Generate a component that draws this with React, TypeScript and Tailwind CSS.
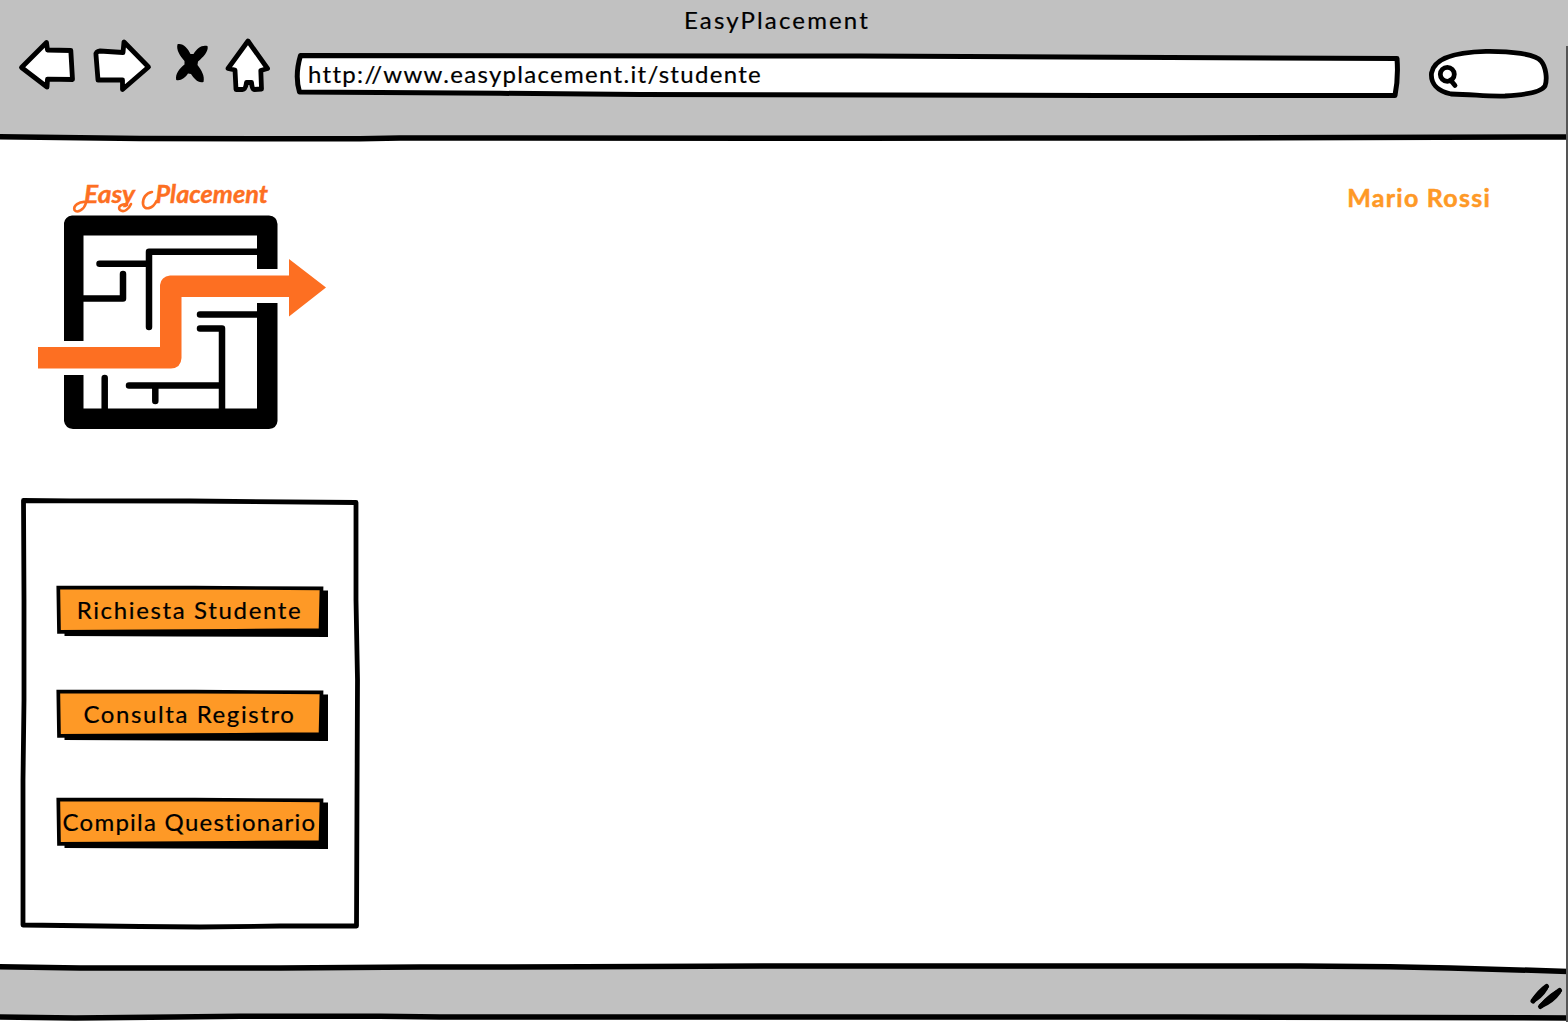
import React from "react";

const line = {
  fill: "none",
  stroke: "#000",
  strokeLinecap: "round" as const,
  strokeLinejoin: "round" as const,
};

function BackIcon() {
  return (
    <svg className="h-[56px] w-[58px] shrink-0" viewBox="18 38 58 56">
      <path {...line} fill="#fff" strokeWidth="4.800" d="M21.500 67.500 L46.500 42.500 L47.500 50 L70.800 50.500 L72.500 79.500 L47.500 79.200 L47 87 Z" />
    </svg>
  );
}

function ForwardIcon() {
  return (
    <svg className="ml-4 h-[56px] w-[60px] shrink-0" viewBox="92 38 60 56">
      <path {...line} fill="#fff" strokeWidth="4.800" d="M148.500 67 L124 42 L123 52.500 L100 51 Q95.500 51.500 96 55 L98 80 L122.500 80 L122.500 89.500 Z" />
    </svg>
  );
}

function StopIcon() {
  return (
    <svg className="ml-[22px] h-[56px] w-[36px] shrink-0" viewBox="174 38 36 56">
      <path d="M177.500 44.300 C183 43 187.500 48 190.500 54 L193.500 54 C197 48 202 44.500 207.500 46 C209 51 203 57.500 198 61.500 L197.500 65 C201.500 70 205 76 203.500 82 C198 83.500 194 78.500 191 74 L188 73.500 C185 78 181 81 176.200 80 C175 74 179.500 68.500 184.500 64.500 L184.500 61 C180 56 176 50 177.500 44.300 Z" />
    </svg>
  );
}

function HomeIcon() {
  return (
    <svg className="ml-[14px] h-[56px] w-[48px] shrink-0" viewBox="224 38 48 56">
      <path {...line} fill="#fff" strokeWidth="4.800" d="M248 41 L267.500 68.500 L260.800 70.500 L261.500 89 L254 89.500 Q252 89 251.500 82.500 L246.500 82.500 Q245.500 89.500 242.500 89.500 L236 89.500 L235 70 L228 68.500 Z" />
    </svg>
  );
}

function AddressBar() {
  return (
    <div className="relative ml-[22px] flex h-[50px] w-[1106px] shrink-0 items-center pb-0.5 pl-[14px]">
      <svg className="absolute inset-0 h-full w-full" viewBox="294 50 1106 50">
        <path {...line} fill="#fff" strokeWidth="5" d="M300.500 55.500 L860 56 L1397 58.500 Q1398.500 78 1395 95.500 L1100 95.500 L640 94.500 L500 93.300 L299.500 92 Q294.500 76 300.500 55.500 Z" />
      </svg>
      <span className="relative whitespace-nowrap text-[24px] leading-[30px] tracking-[1.3px]">
        http://www.easyplacement.it/studente
      </span>
    </div>
  );
}

function SearchBox() {
  return (
    <svg className="ml-[26px] h-[56px] w-[124px] shrink-0" viewBox="1426 46 124 56">
      <path {...line} fill="#fff" strokeWidth="4.800" d="M1451 94 C1437 91 1430.500 83 1431.500 73 C1434 58 1456 52 1486 51.300 C1510 51 1536 54 1541 61 C1546 67 1547.500 79 1545 86 C1541 92.500 1524 95 1505 96 C1485 96.500 1475 94.500 1451 94 Z" />
      <circle {...line} cx="1447.300" cy="74.300" r="7" strokeWidth="4.800" />
      <path {...line} strokeWidth="4.800" d="M1450.500 80 L1455 85.500" />
    </svg>
  );
}

function Logo() {
  return (
    <svg className="h-[260px] w-[300px]" viewBox="34 176 300 260">
      <g fill="#fd6f22" fontSize="25" fontWeight="700" fontStyle="italic" fontFamily="Lato, sans-serif" stroke="#fd6f22" strokeWidth="0.400">
        <text y="202.500">
          <tspan x="84" textLength="51" lengthAdjust="spacingAndGlyphs">Easy</tspan>
          <tspan x="150" textLength="118" lengthAdjust="spacingAndGlyphs"> Placement</tspan>
        </text>
      </g>
      {/* swashes of the wordmark's capitals and descender */}
      <g {...line} stroke="#fd6f22" strokeWidth="2.600">
        <path d="M86 202 C79 201 73 206 74.500 210 C77 213.500 84 210 86 203" />
        <path d="M156.500 201 C153 209 144 211 143 204 C142.500 198 146 193 152 192" />
        <path d="M127 205 C122 203 117 207 120 210 C124 213 129 209 131 204" />
      </g>
      <path fill="#000" d="M72 215.500 H269 Q277 216 277.500 224 V269 H257 V235.500 H83.500 V341 H64 V223 Q65 216.500 72 215.500 Z" />
      <path fill="#000" d="M64 375 H83.500 V408.500 H257 V303 H277.500 V421 Q277 428 269 429 H73 Q65 428 64 421 Z" />
      <g {...line} strokeWidth="6.500">
        <path d="M99.500 263.800 H148 M258 251.800 H149 V327 M83 298.500 H123 V274 M200 314.500 H258 M200 328.500 H222 V409 M129 385.500 H222 M155.300 386 V401 M104.700 378 V409" />
      </g>
      <path fill="#fd6f22" d="M38 347 H160 V285 Q161 276.500 170 275.500 H289 V259 L326 287.500 L289 316.500 V297 H181.500 V358 Q181 368 171 368.500 H38 Z" />
    </svg>
  );
}

function MenuButton({ label, className, textClassName }: { label: string; className: string; textClassName: string }) {
  return (
    <button className={`relative flex h-[52px] w-[274px] items-center justify-center pb-0.5 pr-[5px] ${className}`}>
      <svg className="absolute inset-0 h-full w-full" viewBox="0 0 274 52">
        <path d="M9.500 5.500 H273 V52 L120 51.500 L9.500 51 Z" />
        <path fill="#fe9926" stroke="#000" strokeWidth="3.700" d="M3.300 2.500 L140 2.700 L266.500 3.300 L265.500 45 L180 45.800 L4 46.800 Z" />
      </svg>
      <span className={`relative whitespace-nowrap text-[24px] leading-[30px] ${textClassName}`}>{label}</span>
    </button>
  );
}

function SideMenu() {
  return (
    <nav className="relative ml-[18px] mt-[60px] flex h-[436px] w-[344px] flex-col items-start pl-[37px] pt-[89px]">
      <svg className="absolute inset-0 h-full w-full" viewBox="18 496 344 436">
        <path {...line} strokeWidth="4.800" d="M23.500 500.500 L70 500.800 L190 501 L356 502.500 L356 600 L357.500 680 L357 800 L356.500 926 L280 926 L200 927 L140 926.500 L23 925 L23 780 L24 700 L24 600 Z" />
      </svg>
      <MenuButton label="Richiesta Studente" className="" textClassName="tracking-[1.65px]" />
      <MenuButton label="Consulta Registro" className="mt-[52px]" textClassName="tracking-[1.6px]" />
      <MenuButton label="Compila Questionario" className="mt-[56px]" textClassName="tracking-[1.25px]" />
    </nav>
  );
}

export default function App() {
  return (
    <div className="relative flex h-[1022px] w-[1568px] flex-col overflow-hidden bg-white font-[Lato,sans-serif] text-black [-webkit-text-stroke:0.2px]">
      <header className="relative flex h-[138px] shrink-0 flex-col bg-[#c1c1c1]">
        <h1 className="h-[38px] pl-[684px] pt-[5px] text-[24px] font-normal leading-[30px] tracking-[2.15px]">EasyPlacement</h1>
        <div className="flex h-[60px] items-start pl-[18px]">
          <BackIcon />
          <ForwardIcon />
          <StopIcon />
          <HomeIcon />
          <div className="flex items-start pt-2">
            <div className="pt-1">
              <AddressBar />
            </div>
            <SearchBox />
          </div>
        </div>
        <svg className="absolute left-0 top-[130px] h-[14px] w-full" viewBox="0 130 1568 14">
          <path {...line} strokeWidth="5.500" d="M-4 136.800 L60 137.500 L140 138.500 L360 138.800 L400 138 L860 138.200 L1180 138 L1440 137.200 L1572 137" />
        </svg>
      </header>

      <main className="flex flex-1 items-start justify-between">
        <aside>
          <div className="pl-[34px] pt-[38px]">
            <Logo />
          </div>
          <SideMenu />
        </aside>
        <p className="mr-[77px] mt-11 whitespace-nowrap text-[25px] font-bold leading-[30px] tracking-[1.25px] text-[#fe9926] [-webkit-text-stroke:0.5px]">Mario Rossi</p>
      </main>

      <footer className="relative h-[54px] shrink-0">
        <svg className="absolute bottom-0 left-0 h-[62px] w-full" viewBox="0 960 1568 62">
          <path {...line} fill="#c1c1c1" strokeWidth="5.500" d="M-5 966.800 L32 967.300 L80 968 L280 968 L420 967 L585 966.800 L780 966 L1300 966 L1390 966.800 L1450 968 L1572 971.500 V1018 L1417 1017.500 L1180 1017 L440 1017 L380 1016.300 L240 1016.300 L175 1017 L75 1018 L-5 1017 Z" />
          <path {...line} strokeWidth="5" d="M1546.500 986.500 Q1540 991 1533 1001 M1559.500 990.500 Q1552 996 1540.500 1006.500" />
          <path d="M1548 985 Q1541 986 1531 1000 L1533 1003 Q1542 999 1548 989 Z M1560 989 Q1551 991 1539 1005 L1542 1008 Q1554 1003 1561 993 Z" />
        </svg>
      </footer>
      <div className="absolute right-0 top-[46px] h-full w-[2px] bg-[#555]" />
    </div>
  );
}
